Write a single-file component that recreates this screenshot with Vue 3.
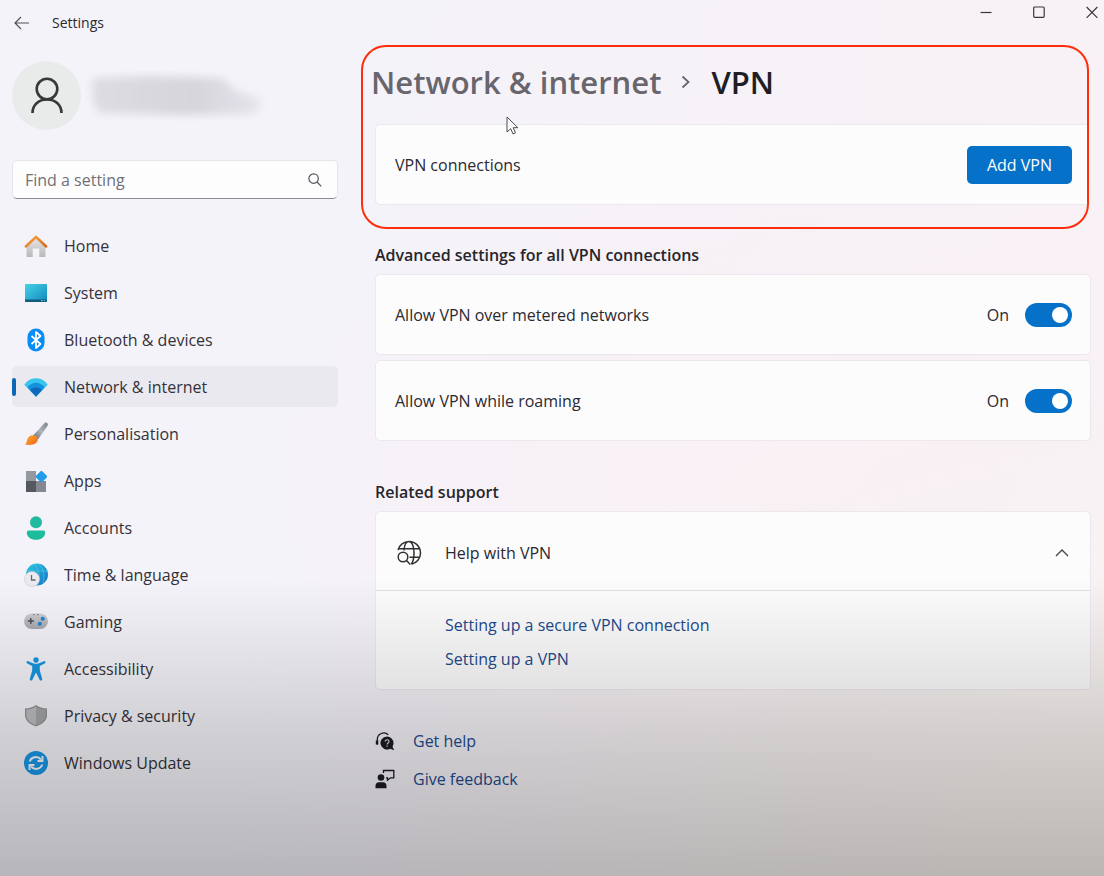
<script setup>
import { ref } from 'vue'

const query = ref('')
const active = ref('Network & internet')
const open = ref(true)
const nav = [
  { label: 'Home', icon: 'home' },
  { label: 'System', icon: 'system' },
  { label: 'Bluetooth & devices', icon: 'bluetooth' },
  { label: 'Network & internet', icon: 'network' },
  { label: 'Personalisation', icon: 'brush' },
  { label: 'Apps', icon: 'apps' },
  { label: 'Accounts', icon: 'accounts' },
  { label: 'Time & language', icon: 'time' },
  { label: 'Gaming', icon: 'gaming' },
  { label: 'Accessibility', icon: 'accessibility' },
  { label: 'Privacy & security', icon: 'shield' },
  { label: 'Windows Update', icon: 'update' },
]
const toggles = ref([
  { id: 'metered', label: 'Allow VPN over metered networks', on: true },
  { id: 'roaming', label: 'Allow VPN while roaming', on: true },
])
</script>

<template>
  <div class="window">
    <header class="titlebar">
      <button class="plain back" aria-label="Back">
        <svg width="16" height="14" viewBox="0 0 16 14" fill="none" stroke="#55535a" stroke-width="1.2"><path d="M7 1 1 7l6 6M1 7h14" /></svg>
      </button>
      <span class="apptitle">Settings</span>
      <div class="controls">
        <button class="plain" aria-label="Minimise"><svg width="12" height="12" viewBox="0 0 12 12" stroke="#3a383e" stroke-width="1.2"><path d="M.5 6.500h11" /></svg></button>
        <button class="plain" aria-label="Maximise"><svg width="12" height="12" viewBox="0 0 12 12" fill="none" stroke="#3a383e" stroke-width="1.2"><rect x=".7" y="1" width="10.500" height="10.300" rx="1" /></svg></button>
        <button class="plain" aria-label="Close"><svg width="12" height="12" viewBox="0 0 12 12" stroke="#3a383e" stroke-width="1.2"><path d="m.6 1 10.800 10.800M11.400 1 .6 11.800" /></svg></button>
      </div>
    </header>

    <div class="body">
      <aside class="sidebar">
        <div class="profile">
          <div class="avatar">
            <svg width="34" height="38" viewBox="0 0 34 38" fill="none" stroke="#37383a" stroke-width="2.600"><circle cx="17" cy="12" r="10.300" /><path d="M2.500 36c0-8 6-13.500 14.500-13.500S31.500 28 31.500 36" /></svg>
          </div>
          <svg class="smudge" width="190" height="50" viewBox="0 0 190 50" aria-hidden="true">
            <defs>
              <filter id="soft" x="-10%" y="-20%" width="120%" height="140%"><feGaussianBlur stdDeviation="4" /></filter>
              <linearGradient id="smudgeFill"><stop offset="0" stop-color="#dddce2" /><stop offset=".6" stop-color="#d6d5db" /><stop offset="1" stop-color="#e5e4eb" /></linearGradient>
            </defs>
            <path d="M9 7 65 5l75 2 12 12 26 9-5 15-76 1-80-2-7-10z" fill="url(#smudgeFill)" filter="url(#soft)" />
          </svg>
        </div>

        <label class="search">
          <input v-model="query" type="text" placeholder="Find a setting" aria-label="Find a setting" />
          <svg width="14" height="14" viewBox="0 0 14 14" fill="none" stroke="#55535a" stroke-width="1.200"><circle cx="5.600" cy="5.600" r="4.700" /><path d="m9 9 4.300 4.300" /></svg>
        </label>

        <nav class="nav">
          <a v-for="item in nav" :key="item.label" href="#" :class="{ active: item.label === active }" @click.prevent="active = item.label">
            <svg v-if="item.icon === 'home'" class="ico" viewBox="0 0 24 24">
              <defs><linearGradient id="hw" x2="0" y2="1"><stop stop-color="#e9e7e7" /><stop offset="1" stop-color="#b9b7b9" /></linearGradient><linearGradient id="hr" x2="1" y2="1"><stop stop-color="#f6a63a" /><stop offset="1" stop-color="#d8661a" /></linearGradient></defs>
              <path d="M2.500 11 12 3l9.500 8v11.200a.8.800 0 0 1-.8.800H15.300v-8.500H8.700V23H3.300a.8.800 0 0 1-.8-.8z" fill="url(#hw)" />
              <path d="M1.800 12.500 12 2.800l10.200 9.700" fill="none" stroke="url(#hr)" stroke-width="2.500" stroke-linecap="round" stroke-linejoin="round" />
            </svg>
            <svg v-else-if="item.icon === 'system'" class="ico" viewBox="0 0 24 24">
              <defs><linearGradient id="sy" x2="1" y2="1"><stop stop-color="#45d3e6" /><stop offset="1" stop-color="#1387bd" /></linearGradient></defs>
              <rect x="1" y="3" width="22" height="18" rx="1" fill="url(#sy)" />
              <path d="M1 18.400h22V20a1 1 0 0 1-1 1H2a1 1 0 0 1-1-1z" fill="#115b80" /><path d="M17 19.700h1.500M20 19.700h1" stroke="#8fd3ea" />
            </svg>
            <svg v-else-if="item.icon === 'bluetooth'" class="ico" viewBox="0 0 24 24">
              <rect x="3.500" y=".5" width="17" height="23" rx="8.500" fill="#0a8cf5" />
              <path d="m7.500 8 9 8-4.500 4V4l4.500 4-9 8" fill="none" stroke="#fff" stroke-width="1.700" stroke-linejoin="round" />
            </svg>
            <svg v-else-if="item.icon === 'network'" class="ico" viewBox="0 0 24 24">
              <path d="M12 20.500.8 8.800C.2 8.200.3 7.700.9 7.200 7-.0 17-.0 23.100 7.200c.6.500.7 1 .1 1.600z" fill="#38c5ef" transform="translate(0 1.500)" />
              <path d="M12 21.500 3.300 12.200c5-6 12.400-6 17.400 0z" fill="#1493dc" />
              <path d="M12 21.500 6 15.100c3.500-3.800 8.500-3.800 12 0z" fill="#1169bc" />
            </svg>
            <svg v-else-if="item.icon === 'brush'" class="ico" viewBox="0 0 24 24">
              <defs><linearGradient id="bh" x1="1" x2="0" y2="1"><stop stop-color="#7a8188" /><stop offset=".5" stop-color="#aeb6bc" /><stop offset="1" stop-color="#5f686f" /></linearGradient><linearGradient id="bt" x2="1" y2="1"><stop stop-color="#ffb03a" /><stop offset="1" stop-color="#ea6413" /></linearGradient></defs>
              <path d="M22.800.8c1.300.8 1.400 2 .6 3.200L14 17.500 8.800 13.700 20.200 1.500C21 .6 21.900.3 22.800.8z" fill="url(#bh)" />
              <path d="M9.500 13.200c2.800.4 4.700 2.500 4.200 4.900-.9 4.200-6.200 5.800-12.900 4.500 2-1.200 1.500-2.800 2.600-5.700 1-2.700 3.300-4.100 6.100-3.700z" fill="url(#bt)" />
            </svg>
            <svg v-else-if="item.icon === 'apps'" class="ico" viewBox="0 0 24 24">
              <rect x="2" y="2" width="10" height="11" fill="#96989f" /><rect x="2" y="12" width="10" height="11" fill="#56585f" /><rect x="12" y="12" width="10" height="11" fill="#858890" />
              <rect x="13" y="3.200" width="8.800" height="8.800" rx="1.200" transform="rotate(45 17.400 7.600)" fill="#219cec" />
            </svg>
            <svg v-else-if="item.icon === 'accounts'" class="ico" viewBox="0 0 24 24">
              <circle cx="12" cy="6.300" r="6" fill="#22b9a0" /><path d="M4.800 14.500h14.400c1.300 0 2 .8 2 2 0 4.500-4 7.300-9.200 7.300s-9.200-2.800-9.200-7.300c0-1.200.7-2 2-2z" fill="#1dbc9c" />
            </svg>
            <svg v-else-if="item.icon === 'time'" class="ico" viewBox="0 0 24 24">
              <defs><linearGradient id="gl" x2="1" y2="1"><stop stop-color="#2fc7e2" /><stop offset="1" stop-color="#1474c4" /></linearGradient></defs>
              <circle cx="13" cy="11.500" r="11" fill="url(#gl)" /><path d="M10 1c5 4 7 14 3 21M3 8h20M14 1c5 3 7 10 5 19" fill="none" stroke="#64d8ee" stroke-width=".7" opacity=".7" />
              <circle cx="8" cy="16" r="7.500" fill="#eceaee" stroke="#cac9ce" stroke-width=".6" /><path d="M7.500 12v5h4" fill="none" stroke="#66676d" stroke-width="1.300" />
            </svg>
            <svg v-else-if="item.icon === 'gaming'" class="ico" viewBox="0 0 24 24">
              <defs><linearGradient id="ga" x2="0" y2="1"><stop stop-color="#cfcfd3" /><stop offset="1" stop-color="#a4a5aa" /></linearGradient></defs>
              <rect y="3.500" width="24" height="15.500" rx="7.700" fill="url(#ga)" /><path d="M9 4.700h1.500M13 4.700h1.500" stroke="#707178" />
              <path d="M6.800 8v6M3.800 11h6" stroke="#4b4c52" stroke-width="1.400" /><circle cx="18.700" cy="8.700" r="2" fill="#1d82d3" /><circle cx="15.800" cy="13.700" r="2" fill="#1d82d3" />
            </svg>
            <svg v-else-if="item.icon === 'accessibility'" class="ico" viewBox="0 0 24 24" fill="#1795e0">
              <circle cx="12" cy="3" r="2.700" />
              <path d="M4.200 4.200 9 6.300c2 .7 4 .7 6 0l4.800-2.100c1.600-.6 2.300 1.600.9 2.300L15.800 9v4.500l2.400 8.300c.4 1.800-1.900 2.500-2.600.9L12 15.500l-3.600 7.200c-.7 1.600-3 .9-2.600-.9l2.400-8.300V9L3.300 6.500c-1.400-.7-.7-2.900.9-2.300z" />
            </svg>
            <svg v-else-if="item.icon === 'shield'" class="ico" viewBox="0 0 24 24">
              <path d="M12 1c3 2.300 6.500 3.300 11 3.500V11c0 5.500-4.500 9.300-11 11.500C5.500 20.300 1 16.500 1 11V4.500C5.500 4.300 9 3.300 12 1z" fill="#8f9193" />
              <path d="M12 2.600c2.700 1.800 6 2.900 9.700 3.100V11c0 4.900-4 8.100-9.700 10.200z" fill="#a3a5a8" /><path d="M12 2.600C9.300 4.400 6 5.500 2.300 5.700V11c0 4.900 4 8.100 9.700 10.200z" fill="#bcbdc0" />
            </svg>
            <svg v-else class="ico" viewBox="0 0 24 24">
              <circle cx="12" cy="12" r="12" fill="#1897e6" />
              <path d="M5.600 10.500C7.300 5.700 13.500 4.500 17 8.500M18.400 13.500c-1.700 4.800-7.900 6-11.400 2" fill="none" stroke="#f5fafd" stroke-width="1.900" /><path d="M18.500 5v5h-5M5.500 19v-5h5" fill="none" stroke="#f5fafd" stroke-width="1.900" />
            </svg>
            <span>{{ item.label }}</span>
          </a>
        </nav>
      </aside>

      <main class="main">
        <section class="highlight">
          <h1>
            <a href="#" class="crumb">Network &amp; internet</a>
            <svg width="10" height="14" viewBox="0 0 10 14" fill="none" stroke="#68666c" stroke-width="1.800"><path d="m1.500 1.500 6 5.500-6 5.500" /></svg>
            <span>VPN</span>
          </h1>
          <div class="card row first">
            <span>VPN connections</span>
            <button class="primary">Add VPN</button>
          </div>
          <svg class="cursor" width="13" height="19" viewBox="0 0 13 19" aria-hidden="true"><path d="M1 1v15l3.700-3.300 2.300 5.200 2.500-1.100-2.300-5.100h4.700z" fill="#fcfcfe" stroke="#4c4a50" stroke-width="1" /></svg>
        </section>

        <h2>Advanced settings for all VPN connections</h2>
        <div class="stack">
          <div v-for="t in toggles" :key="t.id" class="card row">
            <label :for="t.id">{{ t.label }}</label>
            <span class="state">{{ t.on ? 'On' : 'Off' }}</span>
            <input :id="t.id" v-model="t.on" class="switch" type="checkbox" role="switch" />
          </div>
        </div>

        <h2 class="support">Related support</h2>
        <div class="card">
          <button class="plain row expander" :aria-expanded="open" @click="open = !open">
            <svg width="26" height="26" viewBox="0 0 26 26" fill="none" stroke="#302f34" stroke-width="1.500">
              <path d="M2 10C3.300 5 7.800 1.500 13 1.500c6.400 0 11.500 5.100 11.500 11.500 0 5.500-3.900 10.100-9 11.200M2.800 8.800h20.600M13.500 17.200h10M8 10.500C8.300 5.200 10.200 1.500 13 1.500c3 0 5 5 5 11.500 0 4.800-1 9-2.700 11" />
              <circle cx="7" cy="17" r="4.800" /><path d="m10.500 20.500 3.800 4" />
            </svg>
            <span>Help with VPN</span>
            <svg class="chev" width="14" height="8" viewBox="0 0 14 8" fill="none" stroke="#45434a" stroke-width="1.300"><path d="m1 7 6-6 6 6" /></svg>
          </button>
          <div v-if="open" class="links">
            <a href="#">Setting up a secure VPN connection</a>
            <a href="#">Setting up a VPN</a>
          </div>
        </div>

        <div class="footer">
          <a href="#">
            <svg width="20" height="20" viewBox="0 0 20 20">
              <path d="M2.300 13.500V8.500a6.500 6.500 0 0 1 11-4.700" fill="none" stroke="#1c1b20" stroke-width="1.300" /><path d="M.8 9.500h2.500v4H.8z" fill="#1c1b20" />
              <path d="M12 5.500a6.500 6.500 0 0 1 6.500 6.500c0 1.400-.4 2.600-1 3.600l1.700 3.600-4.100-1.500A6.500 6.500 0 1 1 12 5.500z" fill="#1c1b20" />
              <path d="M10.200 10.500c0-2.400 3.800-2.300 3.800 0 0 1.500-1.900 1.300-1.900 3M12.100 14.400v1.300" fill="none" stroke="#dad6dc" stroke-width="1.200" />
            </svg>
            <span>Get help</span>
          </a>
          <a href="#">
            <svg width="20" height="20" viewBox="0 0 20 20">
              <circle cx="6" cy="8.500" r="3.300" fill="#1c1b20" /><path d="M.5 19.300V17c0-2.200 1.300-3.800 3.500-3.800h4c2.200 0 3.500 1.600 3.500 3.800v2.300z" fill="#1c1b20" />
              <path d="M8.500 4V1.500h10.300v7.300h-3.300l-3 2.400V8.800h-1.500" fill="none" stroke="#1c1b20" stroke-width="1.300" />
            </svg>
            <span>Give feedback</span>
          </a>
        </div>
      </main>
    </div>
  </div>
</template>

<style>
body { margin: 0; }
</style>

<style scoped>
.window {
  position: relative;
  box-sizing: border-box;
  min-height: 100vh;
  color: #2b2930;
  font: 16px/22px "Open Sans", "Noto Sans", sans-serif;
  background:
    radial-gradient(ellipse at 100% 100%, #f7f3f0 10%, rgba(247, 243, 240, 0) 45%),
    radial-gradient(ellipse at 75% 55%, #f9f0f5 0%, rgba(249, 240, 245, 0) 50%),
    linear-gradient(100deg, #f4f3f9 30%, #f8f1f6 85%);
}
.window::after {
  content: "";
  position: absolute;
  inset: 0;
  pointer-events: none;
  background: linear-gradient(to bottom, transparent 66%, rgba(0, 0, 0, .15) 84%, rgba(0, 0, 0, .25) 100%);
}
a { color: #1c4a8c; text-decoration: none; }
.plain { padding: 0; border: 0; background: none; font: inherit; color: inherit; }
.titlebar { display: flex; align-items: center; height: 46px; padding-left: 14px; }
.back { display: flex; margin-right: 22px; }
.apptitle { font-size: 14px; }
.controls { display: flex; align-self: flex-start; gap: 41px; margin-left: auto; padding: 6px 6px 0 0; }
.controls .plain { display: flex; }
.body { display: grid; grid-template-columns: 326px minmax(0, 1fr); column-gap: 23px; padding: 0 15px 0 12px; }
.profile { display: flex; align-items: center; gap: 2px; padding-top: 15px; }
.avatar { display: flex; align-items: center; justify-content: center; width: 69px; height: 69px; border-radius: 50%; background: #e9ebeb; }
.search {
  display: flex; align-items: center; box-sizing: border-box; height: 39px; margin-top: 30px; padding: 0 15px 0 12px;
  border: 1px solid #e6e5eb; border-bottom-color: #8d8b92; border-radius: 5px; background: #fdfdfe;
}
.search input { flex: 1; min-width: 0; padding: 0; border: 0; outline: 0; background: none; font: inherit; color: inherit; }
.search input::placeholder { color: #707076; opacity: 1; }
.nav { display: flex; flex-direction: column; gap: 6px; margin-top: 26px; }
.nav a { position: relative; display: flex; align-items: center; gap: 16px; height: 41px; padding-left: 12px; border-radius: 5px; color: #343238; }
.nav a.active { background: #ebe9f0; }
.nav a.active::before { content: ""; position: absolute; left: 0; top: 12px; width: 4px; height: 18px; border-radius: 2px; background: #0c68b5; }
.ico { width: 24px; height: 24px; }
.highlight { position: relative; box-sizing: border-box; padding: 13px 0 22px 12px; border: 2px solid #ff2d0a; border-radius: 25px; margin-top: -1px; }
h1 { display: flex; align-items: center; gap: 20px; margin: 0 0 0 -4px; font-size: 31px; line-height: 44px; font-weight: 600; color: #201e24; }
.crumb { color: #68666c; }
.row { display: flex; align-items: center; box-sizing: border-box; height: 81px; padding: 1px 18px 0 19px; }
.card { border: 1px solid #ebe8ee; border-radius: 5px; background: #fdfcfd; }
.first { justify-content: space-between; margin-top: 20px; padding-right: 15px; border-right: 0; border-radius: 5px 0 0 5px; }
.primary { height: 38px; padding: 0 20px; border: 0; border-radius: 5px; background: #0571c9; color: #fff; font: inherit; }
.cursor { position: absolute; left: 143px; top: 69px; }
h2 { margin: 15px 0 8px 14px; font-size: 16px; line-height: 22px; font-weight: 600; color: #27252b; }
.stack { display: flex; flex-direction: column; gap: 5px; }
.main > .card, .stack { margin: 0 -2px 0 14px; }
.state { margin-left: auto; }
.switch { position: relative; appearance: none; width: 47px; height: 24px; margin: 0 0 0 16px; border-radius: 12px; background: #0571c9; }
.switch::after { content: ""; position: absolute; top: 4px; right: 4px; width: 16px; height: 16px; border-radius: 50%; background: #fff; }
.switch:not(:checked) { background: #8a8a8e; }
.switch:not(:checked)::after { right: 27px; }
h2.support { margin-top: 40px; }
.expander { width: 100%; height: 78px; gap: 23px; padding: 4px 21px 0 20px; text-align: left; }
.chev { margin-left: auto; }
.links { display: flex; flex-direction: column; gap: 12px; padding: 23px 69px 19px; border-top: 1px solid #e2e0e5; }
.footer { display: flex; flex-direction: column; align-items: flex-start; gap: 16px; margin: 40px 0 0 14px; }
.footer a { display: flex; align-items: center; gap: 18px; }
</style>
